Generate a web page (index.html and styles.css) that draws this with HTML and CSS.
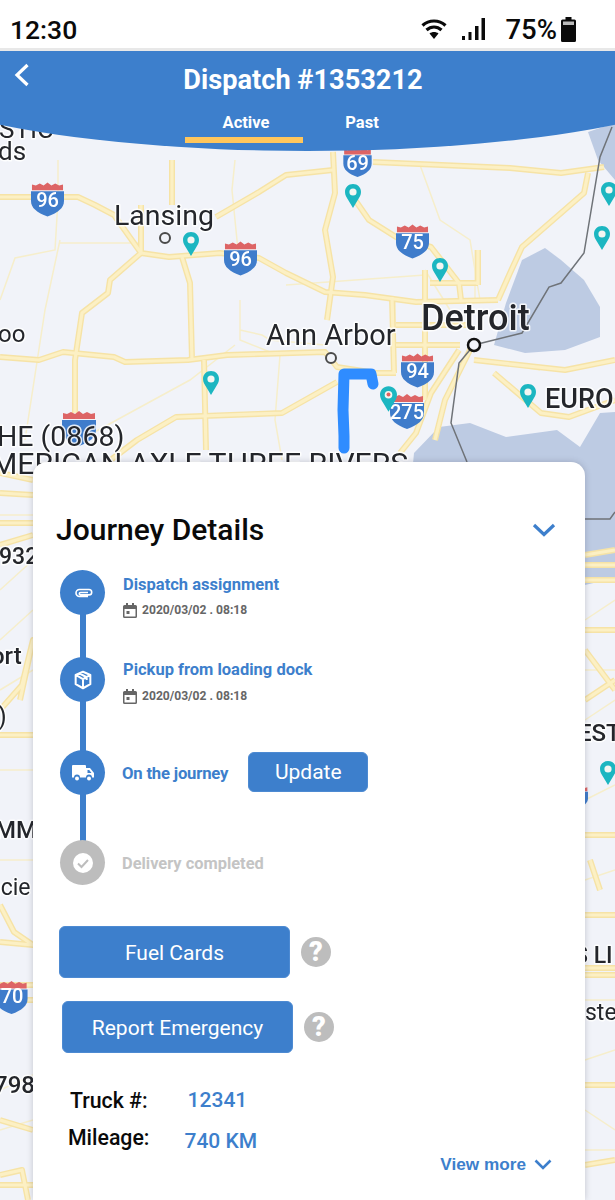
FILE: index.html
```html
<!DOCTYPE html>
<html lang="en">
<head>
<meta charset="utf-8">
<title>Dispatch #1353212</title>
<link rel="stylesheet" href="styles.css">
</head>
<body>
<div class="screen">
  <svg class="map" viewBox="0 0 615 1200" width="615" height="1200" aria-hidden="true">
    <defs>
      <symbol id="pin" viewBox="0 0 16 24">
        <path d="M8 0C3.4 0 0 3.5 0 8c0 3.2 1.6 5.2 3.2 8L8 24l4.8-8c1.600-2.800 3.200-4.800 3.200-8 0-4.500-3.400-8-8-8z" fill="#1cb6c1"/>
        <circle cx="8" cy="8" r="3.600" fill="#f4f6f2"/>
      </symbol>
      <symbol id="shield" viewBox="0 0 34 36">
        <path d="M1 3l4 1 4-2 4 2 4-3 4 3 4-2 4 2 4-1v6H1z" fill="#dd6465"/>
        <path d="M0 10h34v10c0 7-6 12-17 16C6 32 0 27 0 20z" fill="#3f7ccb"/>
      </symbol>
      <g id="roads">
        <path d="M0 197H30L78 197 95 205 114 215 141 253 169 257 220 253 259 258 286 273 325 292 365 295 416 302 498 300"/>
        <path d="M216 217L259 192 286 175 333 170"/>
        <path d="M333 152L335 193 325 230 333 277 327 320"/>
        <path d="M141 205V253L110 280 108 293 82 313 75 360 75 413"/>
        <path d="M0 357L39 360 63 352 114 357 125 362 188 360 227 355 325 352 337 367 376 373 396 373"/>
        <path d="M182 257L190 283 192 360M204 360L206 450"/>
        <path d="M172 160V205M353 197L369 220 396 237 431 247 459 283 461 300"/>
        <path d="M373 162L510 168 561 173 604 167M588 173L584 193 522 247 510 273 498 300"/>
        <path d="M392 297L394 373M425 270V400M396 325H470M396 345H460M478 250V285M430 283H478"/>
        <path d="M337 382L282 413 176 417 137 440 108 462"/>
        <path d="M474 360L565 370 615 360M494 373L541 413 569 417 615 400"/>
        <path d="M459 350L431 393 416 433 400 453M475 340L445 400 435 440"/>
        <path d="M0 473L33 480M0 493L33 495M0 523H33M0 545L33 535M20 700L33 640 22 685 0 710M0 735H33M0 905L14 932 33 945 0 942M0 985H33M0 1000H33M0 1120L33 1130M0 1185H33M0 1175L22 1170 28 1200"/>
        <path d="M585 555L615 550M585 565H615M585 580H615M585 630H615M585 650L615 690M585 700L615 680M585 835H615M585 915H615M585 968H615M585 975H615M585 1085H615M585 1165L615 1160M590 860L600 890"/>
      </g>
    </defs>
    <rect class="land" width="615" height="1200"/>
    <path class="water" d="M506 303L522 260 545 248 561 260 584 280 600 307 600 337 565 350 525 353 494 345z"/>
    <path class="water" d="M414 453L439 427 470 423 506 437 557 430 580 447 600 413 615 412V578L585 585 570 600H400z"/>
    <path class="water" d="M588 132L615 123V180L598 160z"/>
    <g class="thin">
      <path d="M58 160V200L55 250 15 258 0 300"/>
      <path d="M60 243H141M235 160L232 190 238 250M240 300L240 340 270 352M240 330L262 335 270 340 325 345M280 355L275 420 282 460"/>
      <path d="M420 165L440 220 470 240 480 300M60 240L45 310 25 440M80 440L190 380 235 345M286 285L425 275"/>
      <path d="M395 300L395 370M475 250V300M540 370L480 360M425 270L450 310"/>
      <path d="M0 515H33M0 590L33 560M0 640L33 610M0 770H33M0 690L33 670M0 860H33M0 1090L33 1075M0 1130L33 1120"/>
      <path d="M585 620L615 600M585 670H615M585 720L615 700M585 800L615 785M585 880L615 870M585 1000H615M585 1060L615 1050M585 1110L615 1130M585 1150H615"/>
    </g>
    <use class="casing" href="#roads"/>
    <use class="fill" href="#roads"/>
    <path class="border" d="M612 127L600 157 590 217 584 253 561 283 549 287 522 333 474 345 459 363 451 423 467 462M585 519H610L615 512"/>
    <circle class="city" cx="165" cy="238" r="5"/>
    <circle class="city" cx="331" cy="358" r="5"/>
    <circle class="city big" cx="474" cy="345" r="6"/>
    <path class="route" d="M344 448L344 436 343 410 344 374H371L373 384"/>

    <use href="#shield" x="31" y="181" width="33" height="36"/>
    <use href="#shield" x="224" y="240" width="33" height="36"/>
    <use href="#shield" x="341" y="147" width="33" height="30"/>
    <use href="#shield" x="396" y="223" width="33" height="36"/>
    <use href="#shield" x="401" y="352" width="33" height="36"/>
    <use href="#shield" x="384" y="393" width="46" height="36"/>
    <use href="#shield" x="62" y="410" width="34" height="36"/>
    <use href="#shield" x="-5" y="980" width="33" height="34"/>
    <use href="#shield" x="566" y="782" width="22" height="30"/>
    <text class="sh" x="47.500" y="207">96</text>
    <text class="sh" x="240.500" y="266">96</text>
    <text class="sh" x="357.500" y="170">69</text>
    <text class="sh" x="412.500" y="249">75</text>
    <text class="sh" x="417.500" y="378">94</text>
    <text class="sh" x="407" y="419">275</text>
    <text class="sh" x="12" y="1003">70</text>

    <use href="#pin" x="345" y="184" width="16" height="24"/>
    <use href="#pin" x="183" y="232" width="16" height="24"/>
    <use href="#pin" x="432" y="258" width="16" height="24"/>
    <use href="#pin" x="203" y="371" width="16" height="24"/>
    <use href="#pin" x="520" y="384" width="16" height="24"/>
    <use href="#pin" x="380" y="386" width="17" height="26"/>
    <circle class="pin-dot" cx="388.500" cy="394.500" r="2"/>
    <use href="#pin" x="601" y="182" width="16" height="24"/>
    <use href="#pin" x="594" y="226" width="16" height="24"/>
    <use href="#pin" x="600" y="761" width="16" height="24"/>

    <text class="lb" x="114" y="225" font-size="28.500">Lansing</text>
    <text class="lb" x="266" y="345" font-size="29">Ann Arbor</text>
    <text class="lb strong" x="421" y="330" font-size="36">Detroit</text>
    <text class="lb strong" x="545" y="408" font-size="27">EURO</text>
    <text class="lb" x="-2" y="342" font-size="24">oo</text>
    <text class="lb" x="-3" y="446" font-size="28.500">HE (0868)</text>
    <text class="lb" x="-9" y="474" font-size="30.200">MERICAN AXLE THREE RIVERS</text>
    <text class="lb" x="-1" y="138" font-size="26">STIC</text>
    <text class="lb" x="-2" y="160" font-size="26">ds</text>
    <text class="lb strong" x="-1" y="564" font-size="23">932</text>
    <text class="lb strong" x="-9" y="664" font-size="24">ort</text>
    <text class="lb" x="-2" y="725" font-size="25">)</text>
    <text class="lb strong" x="-5" y="838" font-size="24">MM</text>
    <text class="lb" x="-12" y="895" font-size="23">ncie</text>
    <text class="lb strong" x="-6" y="1093" font-size="24">798</text>
    <text class="lb strong" x="578" y="741" font-size="24">EST</text>
    <text class="lb strong" x="574" y="963" font-size="23">S LI</text>
    <text class="lb" x="585" y="1020" font-size="23">ste</text>
  </svg>

  <div class="status">
    <span class="time">12:30</span>
    <div class="status-right">
      <svg class="wifi" viewBox="0 0 26 22" width="26" height="22" aria-hidden="true">
        <path d="M1.500 7.500C8 1.500 18 1.500 24.500 7.500" />
        <path d="M5.500 12C10 8 16 8 20.500 12" />
        <path class="solid" d="M8.500 15.500C11 13.500 15 13.500 17.500 15.500L13 21z"/>
      </svg>
      <svg class="signal" viewBox="0 0 24 23" width="24" height="23" aria-hidden="true">
        <rect x="1" y="19" width="3" height="4"/>
        <rect x="7.500" y="15" width="3" height="8"/>
        <rect x="14" y="9" width="3.500" height="14"/>
        <rect x="20.500" y="1" width="3.500" height="22"/>
      </svg>
      <span class="pct">75%</span>
      <svg class="battery" viewBox="0 0 15 25" width="15" height="25" aria-hidden="true">
        <path d="M4.500 0h6v2.500h3A1.500 1.500 0 0 1 15 4v19.500a1.500 1.500 0 0 1-1.500 1.500h-12A1.500 1.500 0 0 1 0 23.500V4a1.500 1.500 0 0 1 1.500-1.500h3z"/>
        <rect class="battery-empty" x="2" y="4.500" width="11" height="3.500"/>
      </svg>
    </div>
  </div>

  <header class="header">
    <svg class="back" viewBox="0 0 16 24" width="16" height="24" aria-hidden="true"><path d="M13.500 2L3 12l10.500 10"/></svg>
    <h1 class="title">Dispatch #1353212</h1>
    <nav class="tabs">
      <span class="tab tab-active">Active</span>
      <span class="tab">Past</span>
    </nav>
  </header>

  <main class="card">
    <div class="card-head">
      <h2 class="card-title">Journey Details</h2>
      <svg class="chev-big" viewBox="0 0 24 14" width="24" height="14" aria-hidden="true"><path d="M2 2l10 9.500L22 2"/></svg>
    </div>

    <ol class="steps">
      <li class="step step-h1">
        <span class="node">
          <svg viewBox="0 0 24 24" width="24" height="24" class="ico-stroke" aria-hidden="true"><path d="M17 15.500H8.500a3.500 3.500 0 0 1 0-7H18a2.700 2.700 0 0 1 0 5.400H9.500a1.200 1.200 0 0 1 0-2.400H17"/></svg>
        </span>
        <div class="step-body">
          <div class="step-title">Dispatch assignment</div>
          <div class="step-date">
            <svg viewBox="0 0 14 15" width="14" height="15" aria-hidden="true"><path d="M3 0h2v2h4V0h2v2h1.500A1.500 1.500 0 0 1 14 3.500v10a1.500 1.500 0 0 1-1.500 1.500h-11A1.500 1.500 0 0 1 0 13.500v-10A1.500 1.500 0 0 1 1.500 2H3zM1.500 6v7.500h11V6zM3.500 8h3v3h-3z" fill-rule="evenodd"/></svg>
            <span>2020/03/02 . 08:18</span>
          </div>
        </div>
      </li>
      <li class="step step-h2">
        <span class="node">
          <svg viewBox="0 0 24 24" width="22" height="22" class="ico-stroke ico-box" aria-hidden="true"><path d="M12 3l8 3.500v10L12 21l-8-4.500v-10zM4 6.500l8 4.500 8-4.500M12 11v10M8 4.800l8 4.200v3"/></svg>
        </span>
        <div class="step-body">
          <div class="step-title">Pickup from loading dock</div>
          <div class="step-date">
            <svg viewBox="0 0 14 15" width="14" height="15" aria-hidden="true"><path d="M3 0h2v2h4V0h2v2h1.500A1.500 1.500 0 0 1 14 3.500v10a1.500 1.500 0 0 1-1.500 1.500h-11A1.500 1.500 0 0 1 0 13.500v-10A1.500 1.500 0 0 1 1.500 2H3zM1.500 6v7.500h11V6zM3.500 8h3v3h-3z" fill-rule="evenodd"/></svg>
            <span>2020/03/02 . 08:18</span>
          </div>
        </div>
      </li>
      <li class="step step-h3">
        <span class="node">
          <svg viewBox="0 0 22 16" width="22" height="16" class="ico-fill" aria-hidden="true"><path d="M1 0h12a1 1 0 0 1 1 1v2h4l4 5v4.500h-2a3 3 0 0 0-6 0H8a3 3 0 0 0-6 0H0V1a1 1 0 0 1 1-1zM15.500 5v3h4l-2.300-3z" fill-rule="evenodd"/><circle cx="5" cy="13.500" r="2"/><circle cx="17" cy="13.500" r="2"/></svg>
        </span>
        <div class="step-row">
          <span class="step-title step-title-tight">On the journey</span>
          <button class="btn btn-update" type="button">Update</button>
        </div>
      </li>
      <li class="step step-last">
        <span class="node node-off">
          <svg viewBox="0 0 20 20" width="20" height="20" aria-hidden="true"><circle cx="10" cy="10" r="10" fill="#fff"/><path d="M5 10.500l3.500 3.500L15 7" fill="none" stroke="#bdbdbd" stroke-width="2"/></svg>
        </span>
        <div class="step-row">
          <span class="step-title step-title-tight step-title-off">Delivery completed</span>
        </div>
      </li>
    </ol>

    <div class="action action-fuel">
      <button class="btn btn-wide" type="button">Fuel Cards</button>
      <span class="help">?</span>
    </div>
    <div class="action action-report">
      <button class="btn btn-wide" type="button">Report Emergency</button>
      <span class="help">?</span>
    </div>

    <dl class="facts">
      <div class="fact fact-truck"><dt>Truck #:</dt><dd>12341</dd></div>
      <div class="fact fact-mileage"><dt>Mileage:</dt><dd>740 KM</dd></div>
    </dl>

    <div class="more">
      <span>View more</span>
      <svg viewBox="0 0 18 11" width="18" height="11" aria-hidden="true"><path d="M1.500 1.500L9 9l7.500-7.500"/></svg>
    </div>
  </main>
</div>
</body>
</html>
```
FILE: styles.css
```css
* { box-sizing: border-box; }
html, body { margin: 0; padding: 0; }
body { font-family: Roboto, "Liberation Sans", sans-serif; background: #fff; }
h1, h2, ol, dl, dd { margin: 0; padding: 0; }
ol { list-style: none; }

.screen { position: relative; width: 615px; height: 1200px; overflow: hidden; display: flex; flex-direction: column; }

/* map: a free canvas behind everything */
.map { position: absolute; left: 0; top: 0; filter: blur(0.5px); }
.land { fill: #f1f3f9; }
.water { fill: #bdcbe3; }
.thin path { fill: none; stroke: #f6eecb; stroke-width: 1.500; }
.casing { fill: none; stroke: #f6e3a6; stroke-width: 6; stroke-linejoin: round; }
.fill { fill: none; stroke: #fcf0c4; stroke-width: 3.200; stroke-linejoin: round; }
.border { fill: none; stroke: #6f7378; stroke-width: 1.500; }
.city { fill: #f1f3f9; stroke: #4a4a4a; stroke-width: 2; }
.city.big { stroke: #111; stroke-width: 2.500; }
.route { fill: none; stroke: #2f8cff; stroke-width: 11; stroke-linecap: round; stroke-linejoin: round; }
.pin-dot { fill: #e0605f; }
.sh { font-family: Roboto, sans-serif; font-size: 20px; font-weight: 500; fill: #fff; text-anchor: middle; }
.lb { font-family: Roboto, sans-serif; fill: #24262b; stroke: #fff; stroke-width: 3px; paint-order: stroke; stroke-linejoin: round; stroke-opacity: .85; }
.lb.strong { font-weight: 500; }

/* status bar */
.status { position: relative; flex: none; height: 51px; background: #fff; border-bottom: 3px solid #e8e8e8; display: flex; align-items: flex-start; justify-content: space-between; padding: 15px 39px 0 10px; }
.time { font-size: 26.500px; line-height: 30px; font-weight: 500; color: #0a0a0a; }
.status-right { display: flex; align-items: flex-start; }
.wifi { margin-top: 3px; fill: none; stroke: #0a0a0a; stroke-width: 3.200; }
.wifi .solid { fill: #0a0a0a; stroke: none; }
.signal { margin: 2px 0 0 14px; fill: #0a0a0a; }
.pct { margin-left: 20px; font-size: 27.500px; line-height: 30px; font-weight: 500; color: #0a0a0a; }
.battery { margin: 2px 0 0 4px; fill: #0a0a0a; }
.battery-empty { fill: #bbb; }

/* header */
.header { position: relative; flex: none; height: 100px; background: #3d7fcc; clip-path: ellipse(450px 97px at 50% 3px); color: #fff; padding-right: 9px; }
.back { position: absolute; left: 14px; top: 12px; fill: none; stroke: #fff; stroke-width: 3.200; }
.title { padding-top: 12px; font-size: 27.200px; line-height: 34px; font-weight: 700; text-align: center; }
.tabs { display: flex; justify-content: center; margin-top: 14px; }
.tab { width: 118px; height: 32px; font-size: 16.500px; line-height: 24px; font-weight: 700; text-align: center; }
.tab-active { border-bottom: 6px solid #ffc65c; padding-left: 4px; }

/* card */
.card { position: relative; flex: 1; margin: 311px 30px 0 33px; padding-top: 47px; background: #fff; border-radius: 14px 14px 0 0; box-shadow: 0 0 6px rgba(60, 60, 80, .25); }
.card-head { display: flex; align-items: center; justify-content: space-between; height: 40px; padding: 0 29px 0 23px; }
.card-title { font-size: 30px; font-weight: 500; color: #0a0a0a; }
.chev-big { fill: none; stroke: #3d7fcc; stroke-width: 3.200; margin-top: 2px; }

/* timeline */
.steps { margin: 21px 0 0 27px; }
.step { position: relative; display: flex; }
.step-h1 { height: 87px; }
.step-h2 { height: 93px; }
.step-h3 { height: 90px; }
.step-last { height: 45px; }
.step:not(.step-last)::before { content: ""; position: absolute; left: 20px; top: 40px; bottom: -5px; width: 5.500px; background: #3d7fcc; }
.node { position: relative; flex: none; width: 45px; height: 45px; border-radius: 50%; background: #3d7fcc; display: flex; align-items: center; justify-content: center; }
.node-off { background: #bdbdbd; }
.ico-stroke { fill: none; stroke: #fff; stroke-width: 1.600; stroke-linejoin: round; }
.ico-box { stroke-width: 2.200; }
.ico-fill { fill: #fff; }
.step-body { margin-left: 18px; padding-top: 6px; }
.step-h2 .step-body { padding-top: 4px; }
.step-title { font-size: 16.500px; line-height: 18px; font-weight: 700; color: #3d7fcc; }
.step-date { display: flex; align-items: center; gap: 5px; margin-top: 8px; font-size: 12.100px; line-height: 16px; font-weight: 700; color: #666; }
.step-h2 .step-date { margin-top: 9px; }
.step-date svg { fill: #666; }
.step-row { display: flex; align-items: center; height: 47px; margin-left: 17px; }
.step-title-tight { font-size: 16.700px; letter-spacing: -0.200px; }
.step-title-off { font-size: 16.400px; color: #c4c4c4; letter-spacing: 0; }

/* buttons */
.btn { font-family: Roboto, sans-serif; font-size: 21px; line-height: 1; color: #fff; background: #3d7fcc; border: 1px solid #4d8ad2; border-radius: 6px; padding: 2px 0 0; }
.btn-update { width: 120px; height: 40px; margin: -4px 0 0 20px; }
.btn-wide { width: 231px; height: 52px; }
.action { display: flex; align-items: center; gap: 11px; }
.action-fuel { margin: 41px 0 0 26px; }
.action-report { margin: 23px 0 0 29px; }
.help { width: 30px; height: 30px; border-radius: 50%; background: #bdbdbd; color: #fff; font-size: 27px; font-weight: 900; line-height: 30px; text-align: center; }

/* facts */
.facts { margin-top: 33px; }
.fact { display: flex; align-items: center; height: 28px; font-size: 21.300px; font-weight: 500; color: #0a0a0a; }
.fact dd { color: #3d7fcc; font-size: 21px; }
.fact-truck { padding-left: 37px; }
.fact-truck dd { margin-left: 40px; }
.fact-mileage { margin-top: 11px; padding-left: 35px; }
.fact-mileage dt { margin-top: -4px; }
.fact-mileage dd { margin: 3px 0 0 35px; }

/* view more */
.more { display: flex; align-items: center; justify-content: flex-end; gap: 8px; margin-top: 1px; padding-right: 33px; font-family: "Liberation Sans", sans-serif; font-size: 17.200px; font-weight: 700; color: #3d7fcc; }
.more svg { fill: none; stroke: #3d7fcc; stroke-width: 2.600; }
```
